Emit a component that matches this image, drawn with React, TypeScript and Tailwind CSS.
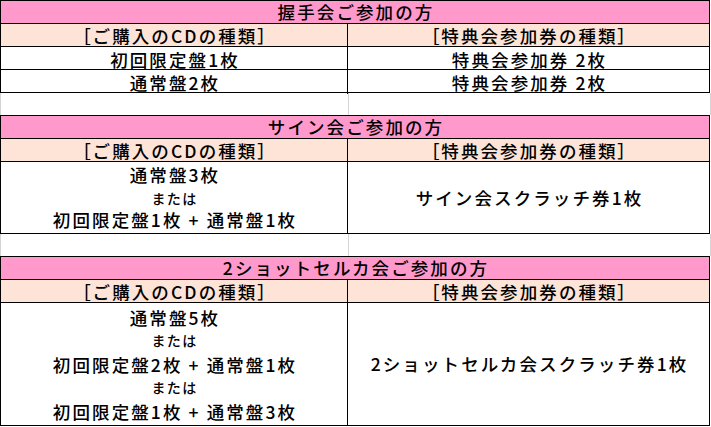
const big = "text-[17.5px] tracking-[2.1px] pl-[2px] leading-[22px]";
const small = "text-[14px] tracking-[1.4px] pl-[1px] leading-[22px]";

function Bracket({ children }: { children: string }) {
  return <span className="[font-feature-settings:'palt']">{children}</span>;
}

function Title({ text }: { text: string }) {
  return (
    <div className={`h-[22px] bg-[#ff99cc] flex items-center justify-center ${big}`}>
      {text}
    </div>
  );
}

function Header() {
  return (
    <div className="grid grid-cols-[347px_1fr] border-t border-black bg-[#fde4d6] h-[23px]">
      <div className={`border-r border-black flex items-center justify-center pt-[1px] ${big}`}>
        <Bracket>［</Bracket>ご購入のCDの種類<Bracket>］</Bracket>
      </div>
      <div className={`flex items-center justify-center pt-[1px] ${big}`}>
        <Bracket>［</Bracket>特典会参加券の種類<Bracket>］</Bracket>
      </div>
    </div>
  );
}

function Gap() {
  return (
    <div className="h-[22px] grid grid-cols-[348px_362px_1fr]">
      <div className="border-l border-[#d4d4d4]" />
      <div className="border-l border-[#d4d4d4]" />
      <div className="border-l border-[#d4d4d4]" />
    </div>
  );
}

function Lines({ lines, lh }: { lines: string[]; lh: string }) {
  return (
    <div className="flex flex-col items-center justify-center">
      {lines.map((l, i) => (
        <div
          key={i}
          className={`${l === "または" ? small : big} ${lh}`}
        >
          {l}
        </div>
      ))}
    </div>
  );
}

export default function App() {
  return (
    <div className="w-[711px] h-[427px] bg-white text-black font-medium font-['Noto_Sans_CJK_JP',sans-serif] overflow-hidden">
      {/* 握手会 */}
      <div className="w-[710px] border border-black">
        <Title text="握手会ご参加の方" />
        <Header />
        {[
          ["初回限定盤1枚", "特典会参加券 2枚"],
          ["通常盤2枚", "特典会参加券 2枚"],
        ].map(([l, r]) => (
          <div key={l} className="grid grid-cols-[347px_1fr] border-t border-black h-[23px]">
            <div className={`border-r border-black flex items-center justify-center pt-[2px] ${big}`}>{l}</div>
            <div className={`flex items-center justify-center pt-[2px] ${big}`}>{r}</div>
          </div>
        ))}
      </div>

      <Gap />

      {/* サイン会 */}
      <div className="w-[710px] border border-black">
        <Title text="サイン会ご参加の方" />
        <Header />
        <div className="grid grid-cols-[347px_1fr] border-t border-black h-[72px]">
          <div className="border-r border-black flex items-center justify-center pt-[1px]">
            <Lines lh="!leading-[22.5px]" lines={["通常盤3枚", "または", "初回限定盤1枚 + 通常盤1枚"]} />
          </div>
          <div className={`flex items-center justify-center ${big}`}>サイン会スクラッチ券1枚</div>
        </div>
      </div>

      <Gap />

      {/* 2ショット */}
      <div className="w-[710px] border border-black">
        <Title text="2ショットセルカ会ご参加の方" />
        <Header />
        <div className="grid grid-cols-[347px_1fr] border-t border-black h-[123px]">
          <div className="border-r border-black flex items-center justify-center pt-[1px]">
            <Lines
              lh="!leading-[23.5px]"
              lines={["通常盤5枚", "または", "初回限定盤2枚 + 通常盤1枚", "または", "初回限定盤1枚 + 通常盤3枚"]}
            />
          </div>
          <div className={`flex items-center justify-center ${big}`}>2ショットセルカ会スクラッチ券1枚</div>
        </div>
      </div>
    </div>
  );
}
